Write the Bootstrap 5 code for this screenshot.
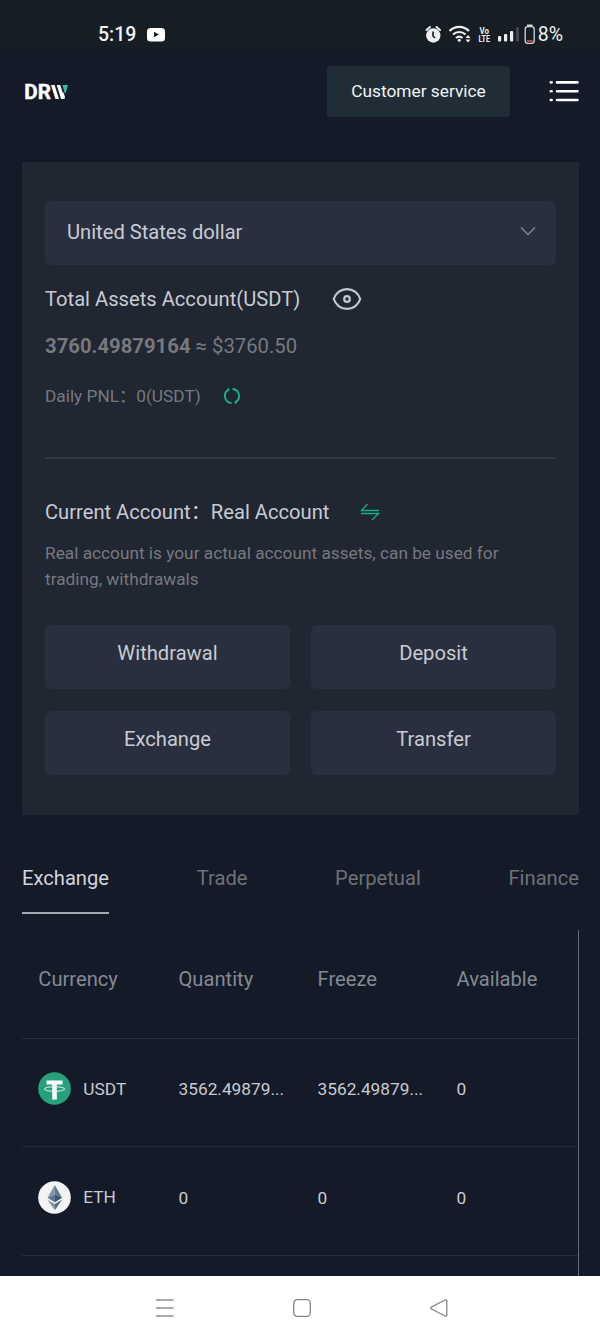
<!DOCTYPE html>
<html lang="en">
<head>
<meta charset="utf-8">
<meta name="viewport" content="width=device-width, initial-scale=1">
<title>Assets</title>
<link href="https://cdn.jsdelivr.net/npm/bootstrap@5.3.0/dist/css/bootstrap.min.css" rel="stylesheet">
<style>
  body { background: #141a27; color: #c9cbd2; font-family: Roboto, "Noto Sans CJK SC", sans-serif; font-size: 20.16px; line-height: 26px; height: 1340px; overflow: hidden; }
  svg { display: block; flex: none; }
  svg text { font-family: Roboto, sans-serif; }
  .status { height: 53px; padding: 17px 37px 0 98px; background: linear-gradient(#161d23 88%, #151a28); color: #f2f3f4; }
  .clock { font-size: 19.5px; font-weight: 500; line-height: 36px; width: 49px; }
  .battery-text { font-size: 19.5px; line-height: 36px; }
  .topbar { height: 109px; padding: 13px 21px 0 24px; }
  .btn-service { width: 183px; height: 51px; background: #202d37; color: #f1f4f5; border: 0; border-radius: 3px; font-size: 17.3px; padding: 0; }
  .btn-service:hover { background: #283844; color: #fff; }
  .menu-icon { margin-left: 39px; }
  .page { padding: 0 21px 0 22px; }
  .assets { background: #202632; height: 652.5px; padding: 39px 23px 0; }
  .picker { background: #2a2f3f; height: 64px; border-radius: 6px; padding: 0 20px 2px 22px; }
  .dim { color: #77797e; }
  .fine { font-size: 17.25px; }
  .total { margin-top: 21px; gap: 32px; }
  .value { margin-top: 21px; font-size: 20.3px; }
  .pnl { margin-top: 24px; gap: 22px; }
  .pnl .fine { font-size: 17.25px; }
  .rule { height: 2px; background: #323843; margin: 48px 0 39.5px; }
  .account { gap: 31px; }
  .about { margin-top: 15.5px; line-height: 26px; }
  .actions { display: grid; grid-template-columns: 1fr 1fr; gap: 22px 21px; margin-top: 33px; }
  .actions .btn { height: 64px; background: #2a2f3f; color: #c9cbd2; border: 0; border-radius: 6px; font-size: 20.16px; line-height: 26px; padding: 0 0 8px; }
  .tabs { padding-top: 50px; height: 115.5px; }
  .tabs .nav-link { padding: 0; color: #6f7176; height: 49.5px; border-bottom: 2px solid transparent; }
  .tabs .nav-link.active { color: #d3d4da; border-color: #a5a6b0; }
  .coins { height: 346px; border-right: 1px solid #686c76; overflow: hidden; }
  .coins table { table-layout: fixed; width: 100%; margin: 0; --bs-table-bg: transparent; }
  .coins th { height: 108px; padding: 0 0 9px 17.5px; font-weight: 400; color: #858993; vertical-align: middle; border-bottom: 1px solid #282d39; }
  .coins td { height: 108.5px; padding: 0 0 6px 17.5px; color: #c9cbd2; font-size: 17.3px; vertical-align: middle; border-bottom: 1px solid #262c38; white-space: nowrap; }
  .coins th:first-child, .coins td:first-child { padding-left: 16.3px; }
  .coin { gap: 12px; padding-bottom: 1px; }
  .sysnav { height: 64px; background: #fff; padding: 0 151px 0 155px; }
</style>
</head>
<body>
<div class="status d-flex justify-content-between align-items-start">
  <div class="d-flex">
    <span class="clock">5:19</span>
    <svg width="18" height="36" viewBox="0 0 18 36"><rect y="11" width="18" height="13.5" rx="3.5" fill="#fff"/><path d="M7 14.8v5.4l4.8-2.7z" fill="#161d23"/></svg>
  </div>
  <div class="d-flex">
    <svg width="113" height="36" viewBox="425 17 113 36">
      <circle cx="433.3" cy="35.5" r="7.2" fill="#eceeef"/>
      <path d="M426.5 30l3.5-3M440 30l-3.5-3" stroke="#eceeef" stroke-width="2" stroke-linecap="round"/>
      <path d="M433 31.5v4.5l2 2" fill="none" stroke="#161d23" stroke-width="1.6"/>
      <g fill="none" stroke="#eceeef" stroke-width="2.2"><path d="M449.500 31a13.500 13.500 0 0 1 19.500 0"/><path d="M453 34.500a9 9 0 0 1 12.500 0"/><path d="M456 38a5 5 0 0 1 6.500 0"/></g>
      <circle cx="459.200" cy="40.300" r="1.500" fill="#eceeef"/>
      <path d="M465.500 38l2.500-3 2.500 3zM465.500 39.500l2.500 3 2.500-3z" fill="#eceeef"/>
      <text x="479.500" y="33.500" font-size="8.500" font-weight="700" fill="#eceeef" textLength="9.500" lengthAdjust="spacingAndGlyphs">Vo</text>
      <text x="478.500" y="42" font-size="9" font-weight="700" fill="#eceeef" textLength="11.500" lengthAdjust="spacingAndGlyphs">LTE</text>
      <g fill="#eceeef"><rect x="498" y="36" width="3.200" height="5.500" rx="1"/><rect x="504" y="34" width="3.200" height="7.500" rx="1"/><rect x="510" y="31" width="3.200" height="10.500" rx="1"/><rect x="516" y="27" width="3" height="14.500" rx="1" fill="#40474d"/></g>
      <rect x="525.200" y="26.700" width="9" height="16.600" rx="2.500" fill="none" stroke="#d5d8da" stroke-width="1.300"/>
      <rect x="527" y="24.500" width="5.500" height="1.600" fill="#d5d8da"/>
      <rect x="526.800" y="40" width="6" height="2" fill="#b5453e"/>
    </svg>
    <span class="battery-text">8%</span>
  </div>
</div>

<header class="topbar d-flex justify-content-between align-items-start">
  <svg width="46" height="51" viewBox="24 66 46 51">
    <text x="24.300" y="99" font-size="19.500" font-weight="700" fill="#fff" stroke="#fff" stroke-width=".4" textLength="26.700" lengthAdjust="spacingAndGlyphs">DR</text>
    <path d="M51 85h3.600l4.400 14h-3.600zM56.700 85h3.600l4.400 14h-3.600z" fill="#fff"/>
    <path d="M63 91.500l1.900 5-.7 2.500h-1.600z" fill="#fff"/>
    <path d="M62.500 85h5.500l-2.500 8.500h-.6z" fill="#25c4a4"/>
  </svg>
  <div class="d-flex">
    <button class="btn btn-service" type="button">Customer service</button>
    <svg class="menu-icon" width="30" height="51" viewBox="549 66 30 51"><g stroke="#fff" stroke-width="2.600" stroke-linecap="round"><path d="M557 82.400h20.500M557 91.200h20.500M557 100h20.500M550.800 82.400h.8M550.800 91.200h.8M550.800 100h.8"/></g></svg>
  </div>
</header>

<main class="page">
  <section class="assets">
    <div class="picker d-flex align-items-center justify-content-between">
      <span>United States dollar</span>
      <svg width="16" height="12" viewBox="0 0 16 12"><path d="M1 1.500l7 7 7-7" fill="none" stroke="#898c96" stroke-width="1.300"/></svg>
    </div>
    <div class="total d-flex align-items-center">
      <span>Total Assets Account(USDT)</span>
      <svg width="30" height="24" viewBox="0 0 30 24"><g fill="none" stroke="#c5c8ce" stroke-width="2.200"><path d="M1.800 12C3.500 6.500 8.500 2.100 15 2.100S26.500 6.500 28.200 12C26.500 17.500 21.500 21.900 15 21.900S3.500 17.500 1.800 12z"/><circle cx="15" cy="12" r="2.800"/></g></svg>
    </div>
    <div class="value dim"><b>3760.49879164</b> ≈ $3760.50</div>
    <div class="pnl dim fine d-flex align-items-center">
      <span>Daily PNL：0(USDT)</span>
      <svg width="18" height="18" viewBox="0 0 18 18"><g fill="none" stroke="#16b58a" stroke-width="1.800"><path d="M9.500 2A7 7 0 0 1 12.800 14.900"/><path d="M8.500 16A7 7 0 0 1 5.200 3.100"/><path d="M4.800 1l1.200 2-1.800 1.300M13.200 17l-1.200-2 1.800-1.300" stroke-width="1.200"/></g></svg>
    </div>
    <div class="rule"></div>
    <div class="account d-flex align-items-center">
      <span>Current Account：Real Account</span>
      <svg width="20" height="18" viewBox="0 0 20 18"><path d="M7.500 1L1.500 7.500H19M1 10.500h17.500L12 17" fill="none" stroke="#14b088" stroke-width="1.300"/></svg>
    </div>
    <div class="about dim fine">Real account is your actual account assets, can be used for<br>trading, withdrawals</div>
    <div class="actions">
      <button class="btn" type="button">Withdrawal</button>
      <button class="btn" type="button">Deposit</button>
      <button class="btn" type="button">Exchange</button>
      <button class="btn" type="button">Transfer</button>
    </div>
  </section>

  <nav class="tabs nav justify-content-between flex-nowrap align-items-start">
    <a class="nav-link active" href="#">Exchange</a>
    <a class="nav-link" href="#">Trade</a>
    <a class="nav-link" href="#">Perpetual</a>
    <a class="nav-link" href="#">Finance</a>
  </nav>

  <section class="coins">
    <table class="table table-borderless">
      <thead><tr><th>Currency</th><th>Quantity</th><th>Freeze</th><th>Available</th></tr></thead>
      <tbody>
        <tr>
          <td><div class="coin d-flex align-items-center">
            <svg width="33" height="33" viewBox="0 0 33 33"><circle cx="16.500" cy="16.500" r="16.300" fill="#27a17b"/><path d="M8.500 8.500h16v4h-5.700v15h-4.600v-15H8.500z" fill="#fff"/><ellipse cx="16.500" cy="17" rx="10.200" ry="2.300" fill="none" stroke="#d9f2ea" stroke-width="1"/></svg>
            <span>USDT</span></div></td>
          <td>3562.49879...</td><td>3562.49879...</td><td>0</td>
        </tr>
        <tr>
          <td><div class="coin d-flex align-items-center">
            <svg width="33" height="33" viewBox="0 0 33 33"><circle cx="16.500" cy="16.500" r="16.300" fill="#f2f3f3"/><path d="M16.800 4L9.500 16.800l7.300-3.300z" fill="#8396a7"/><path d="M16.800 4l7.300 12.800-7.300-3.300z" fill="#60798f"/><path d="M9.500 16.800l7.300-3.300v7.800z" fill="#58738c"/><path d="M24.100 16.800l-7.300-3.300v7.800z" fill="#38536d"/><path d="M9.500 18.700l7.300 4.200v6.300z" fill="#8396a7"/><path d="M24.100 18.700l-7.300 4.200v6.300z" fill="#567087"/></svg>
            <span>ETH</span></div></td>
          <td>0</td><td>0</td><td>0</td>
        </tr>
      </tbody>
    </table>
  </section>
</main>

<footer class="sysnav d-flex justify-content-between align-items-center">
  <svg width="20" height="20" viewBox="0 0 20 20"><path d="M1 2h17.500M1 10h17.500M1 18h17.500" stroke="#8f8f8f" stroke-width="1.500"/></svg>
  <svg width="20" height="20" viewBox="0 0 20 20"><rect x="1.700" y="1.700" width="16.600" height="16.600" rx="3.600" fill="none" stroke="#858585" stroke-width="1.300"/></svg>
  <svg width="20" height="20" viewBox="0 0 20 20"><path d="M2.200 9.200L16 2q1.800-.6 1.800 1.200v13.600q0 1.800-1.800 1.200L2.200 10.800q-1.200-.8 0-1.600z" fill="none" stroke="#858585" stroke-width="1.300"/></svg>
</footer>
<script src="https://cdn.jsdelivr.net/npm/bootstrap@5.3.0/dist/js/bootstrap.bundle.min.js"></script>
</body>
</html>
